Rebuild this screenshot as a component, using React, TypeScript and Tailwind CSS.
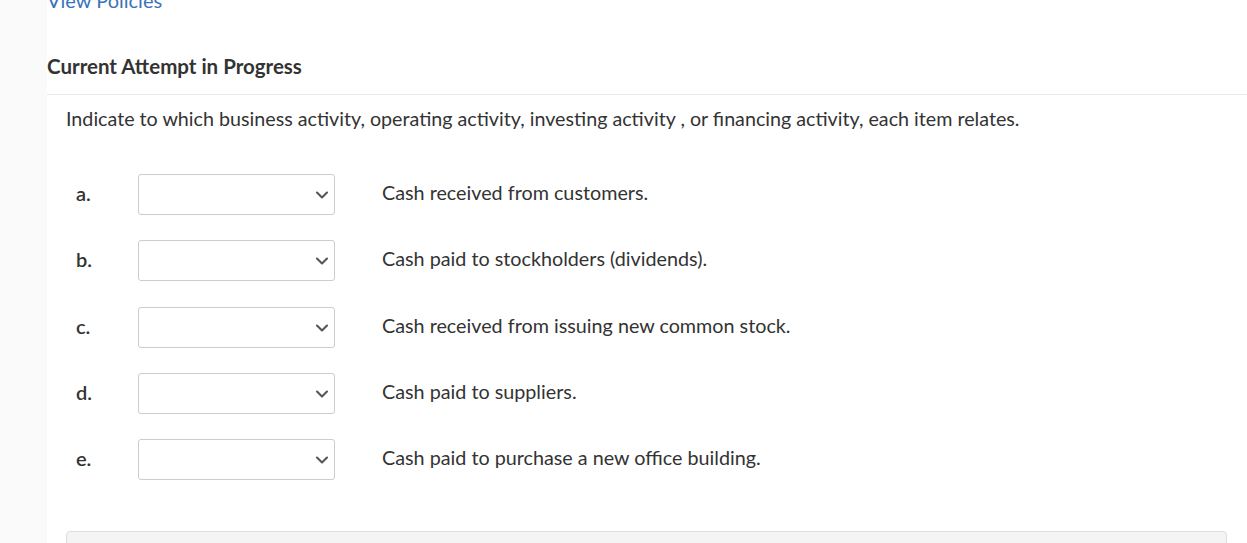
import { ChevronDown } from "lucide-react";

const items = [
  { label: "a.", text: "Cash received from customers." },
  { label: "b.", text: "Cash paid to stockholders (dividends)." },
  { label: "c.", text: "Cash received from issuing new common stock." },
  { label: "d.", text: "Cash paid to suppliers." },
  { label: "e.", text: "Cash paid to purchase a new office building." },
];

function SelectBox() {
  return (
    <div className="relative h-[41px] w-[197px] shrink-0 rounded-[3px] border border-[#cccccc] bg-white">
      <ChevronDown
        className="absolute right-[2px] top-[10px] h-[20px] w-[20px] text-[#555555]"
        strokeWidth={2.5}
      />
    </div>
  );
}

export default function App() {
  return (
    <div
      className="flex h-[543px] w-full overflow-hidden bg-white text-[#333333]"
      style={{ fontFamily: "Lato, 'Open Sans', sans-serif" }}
    >
      {/* left gutter */}
      <div className="w-[47px] shrink-0 bg-[#fafafa]" />

      <div className="flex-1">
        <a className="-mt-[12px] block text-[20px] leading-[24px] text-[#3b73b9]">
          View Policies
        </a>

        <h2 className="mt-[42px] text-[20.5px] font-bold leading-[24px]">
          Current Attempt in Progress
        </h2>

        <div className="mt-[16px] border-t border-[#e8e8e8]" />

        <div className="pl-[19px]">
          <p className="mt-[12px] text-[19.7px] leading-[24px]">
            Indicate to which business activity, operating activity, investing
            activity , or financing activity, each item relates.
          </p>

          <div className="mt-[43px] flex flex-col gap-[25.25px]">
            {items.map((item) => (
              <div key={item.label} className="flex items-center">
                <div className="mb-[3px] w-[72px] shrink-0 pl-[10px] text-[20px] font-semibold leading-[24px]">
                  {item.label}
                </div>
                <SelectBox />
                <div className="mb-[3px] pl-[47px] text-[19.75px] leading-[24px]">
                  {item.text}
                </div>
              </div>
            ))}
          </div>

          <div className="mr-[20px] mt-[51px] h-[40px] rounded-[4px] border border-[#dddddd] bg-[#f4f4f4]" />
        </div>
      </div>
    </div>
  );
}
